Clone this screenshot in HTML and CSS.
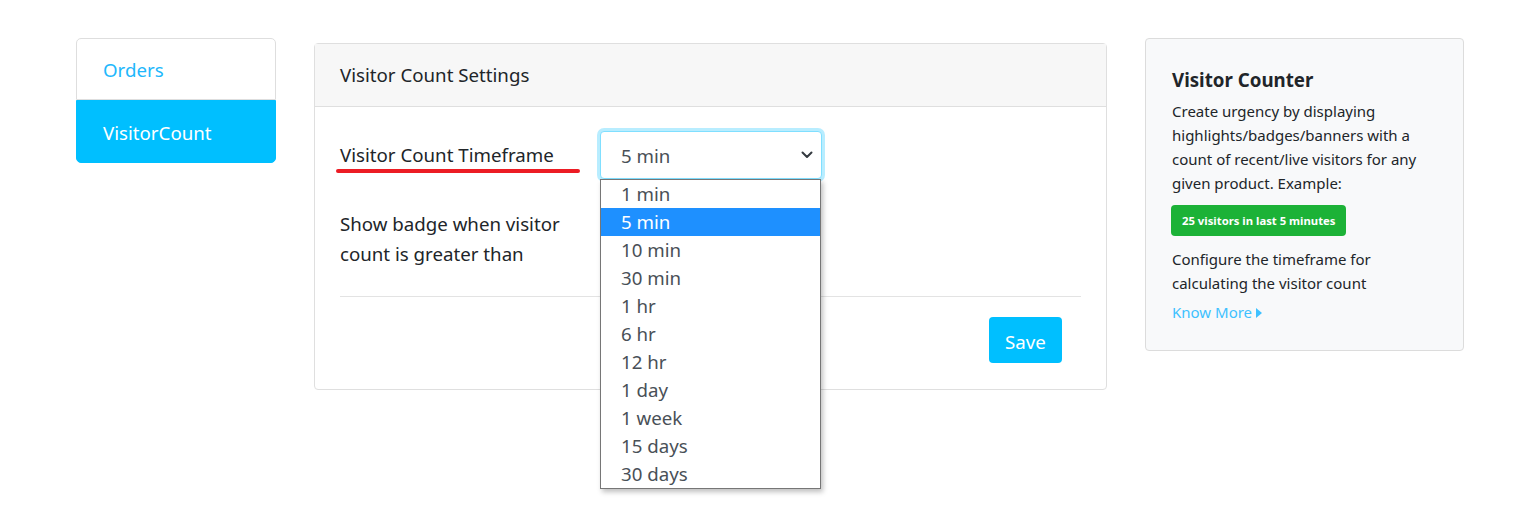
FILE: index.html
```html
<!DOCTYPE html>
<html lang="en">
<head>
    <meta charset="UTF-8">
    <title>Visitor Count Settings</title>
    <link rel="stylesheet" href="styles.css">
</head>
<body>
    <div class="layout">
        <!-- Side navigation -->
        <nav class="side-nav">
            <a class="nav-item" href="#">Orders</a>
            <a class="nav-item active" href="#">VisitorCount</a>
        </nav>

        <!-- Settings card -->
        <div class="card">
            <div class="card-header">Visitor Count Settings</div>
            <div class="card-body">
                <div class="form-row">
                    <label class="form-label marked">Visitor Count Timeframe</label>
                    <div class="select-wrap">
                        <div class="select-box">
                            <span>5 min</span>
                            <svg class="chevron" width="12" height="8" viewBox="0 0 12 8">
                                <path d="M1.5 1.5 L6 6 L10.5 1.5" fill="none" stroke="#343a40" stroke-width="2" stroke-linecap="round" stroke-linejoin="round"/>
                            </svg>
                        </div>
                        <ul class="options">
                            <li>1 min</li>
                            <li class="selected">5 min</li>
                            <li>10 min</li>
                            <li>30 min</li>
                            <li>1 hr</li>
                            <li>6 hr</li>
                            <li>12 hr</li>
                            <li>1 day</li>
                            <li>1 week</li>
                            <li>15 days</li>
                            <li>30 days</li>
                        </ul>
                    </div>
                </div>

                <div class="form-row second">
                    <label class="form-label">Show badge when visitor count is greater than</label>
                </div>

                <hr class="divider">

                <div class="actions">
                    <button type="button" class="btn-save">Save</button>
                </div>
            </div>
        </div>

        <!-- Info panel -->
        <aside class="info">
            <h3>Visitor Counter</h3>
            <p>Create urgency by displaying highlights/badges/banners with a count of recent/live visitors for any given product. Example:</p>
            <div class="badge">25 visitors in last 5 minutes</div>
            <p class="note">Configure the timeframe for calculating the visitor count</p>
            <a class="more" href="#">Know More
                <svg width="6" height="10" viewBox="0 0 6 10"><path d="M0 0 L6 5 L0 10 Z" fill="#3ec1ff"/></svg>
            </a>
        </aside>
    </div>
</body>
</html>
```

FILE: styles.css
```css
/* General */
html, body {
    min-height: 100%;
}

body {
    margin: 0;
    min-height: 530px;
    font-family: "Noto Sans", "Open Sans", Arial, sans-serif;
    color: #212529;
    background: #fff;
}

.layout {
    display: flex;
    align-items: flex-start;
    min-height: 530px;
    box-sizing: border-box;
    padding: 38px 0 0 76px;
}

/* Side nav */
.side-nav {
    width: 200px;
    display: flex;
    flex-direction: column;
}

.nav-item {
    display: block;
    height: 62px;
    line-height: 62px;
    padding: 0 26px;
    font-size: 18.7px;
    color: #21b7fc;
    text-decoration: none;
    border: 1px solid #dedede;
    box-sizing: border-box;
}

.nav-item:first-child {
    border-radius: 5px 5px 0 0;
}

.nav-item.active {
    background: #00bfff;
    border-color: #00bfff;
    color: #fff;
    height: 63px;
    line-height: 63px;
    border-radius: 0 0 5px 5px;
}

/* Main card */
.card {
    width: 793px;
    margin: 5px 38px 0;
    border: 1px solid #dfdfdf;
    border-radius: 4px;
    box-sizing: border-box;
}

.card-header {
    height: 62px;
    line-height: 62px;
    padding: 0 25px;
    background: #f7f7f7;
    border-bottom: 1px solid #dfdfdf;
    font-size: 18.7px;
    color: #212529;
}

.card-body {
    padding: 24px 25px 26px;
}

.form-row {
    display: flex;
    align-items: center;
}

.form-row.second {
    margin-top: 30px;
}

.form-label {
    width: 260px;
    font-size: 18.7px;
    line-height: 30px;
    color: #212529;
}

.form-row.second .form-label {
    width: 232px;
}

.marked {
    position: relative;
}

.marked::after {
    content: "";
    position: absolute;
    left: -4px;
    top: 29px;
    width: 244px;
    height: 4px;
    border-radius: 2px;
    background: #ec1c24;
}

/* Select + open list */
.select-wrap {
    position: relative;
    width: 222px;
}

.select-box {
    height: 48px;
    box-sizing: border-box;
    display: flex;
    align-items: center;
    justify-content: space-between;
    padding: 0 6px 0 20px;
    border: 1px solid #80dfff;
    border-radius: 4px;
    box-shadow: 0 0 0 3px rgba(0, 191, 255, 0.28);
    font-size: 18.7px;
    color: #495057;
    background: #fff;
}

.chevron {
    margin-right: 2px;
}

.options {
    position: absolute;
    top: 48px;
    left: 0;
    width: 221px;
    box-sizing: border-box;
    margin: 0;
    padding: 0;
    list-style: none;
    background: #fff;
    border: 1px solid #767676;
    box-shadow: 2px 3px 5px rgba(0, 0, 0, 0.25);
    z-index: 5;
}

.options li {
    height: 28px;
    line-height: 28px;
    padding-left: 20px;
    font-size: 18.7px;
    color: #495057;
}

.options li.selected {
    background: #1e90ff;
    color: #fff;
}

.divider {
    border: 0;
    border-top: 1px solid #e3e3e3;
    margin: 27px 0 20px;
}

.actions {
    display: flex;
    justify-content: flex-end;
    padding-right: 19px;
}

.btn-save {
    width: 73px;
    height: 46px;
    padding: 3px 0 0;
    border: none;
    border-radius: 4px;
    background: #00bfff;
    color: #fff;
    font-family: inherit;
    font-size: 18.7px;
    cursor: pointer;
}

/* Info panel */
.info {
    width: 319px;
    box-sizing: border-box;
    padding: 27px 26px 26px;
    background: #f8f9fa;
    border: 1px solid #dcdcdc;
    border-radius: 4px;
}

.info h3 {
    margin: 0 0 5px;
    font-size: 18.7px;
    line-height: 28px;
    font-weight: bold;
    color: #212529;
}

.info p {
    margin: 0;
    font-size: 15px;
    line-height: 24px;
    color: #212529;
}

.badge {
    width: fit-content;
    margin: 10px 0 11px -1px;
    padding: 0 11px;
    height: 31px;
    line-height: 31px;
    background: #1cb237;
    color: #fff;
    font-size: 11.3px;
    font-weight: bold;
    border-radius: 4px;
}

.more {
    display: inline-block;
    margin-top: 5px;
    font-size: 15px;
    line-height: 24px;
    color: #3ec1ff;
    text-decoration: none;
}
```
